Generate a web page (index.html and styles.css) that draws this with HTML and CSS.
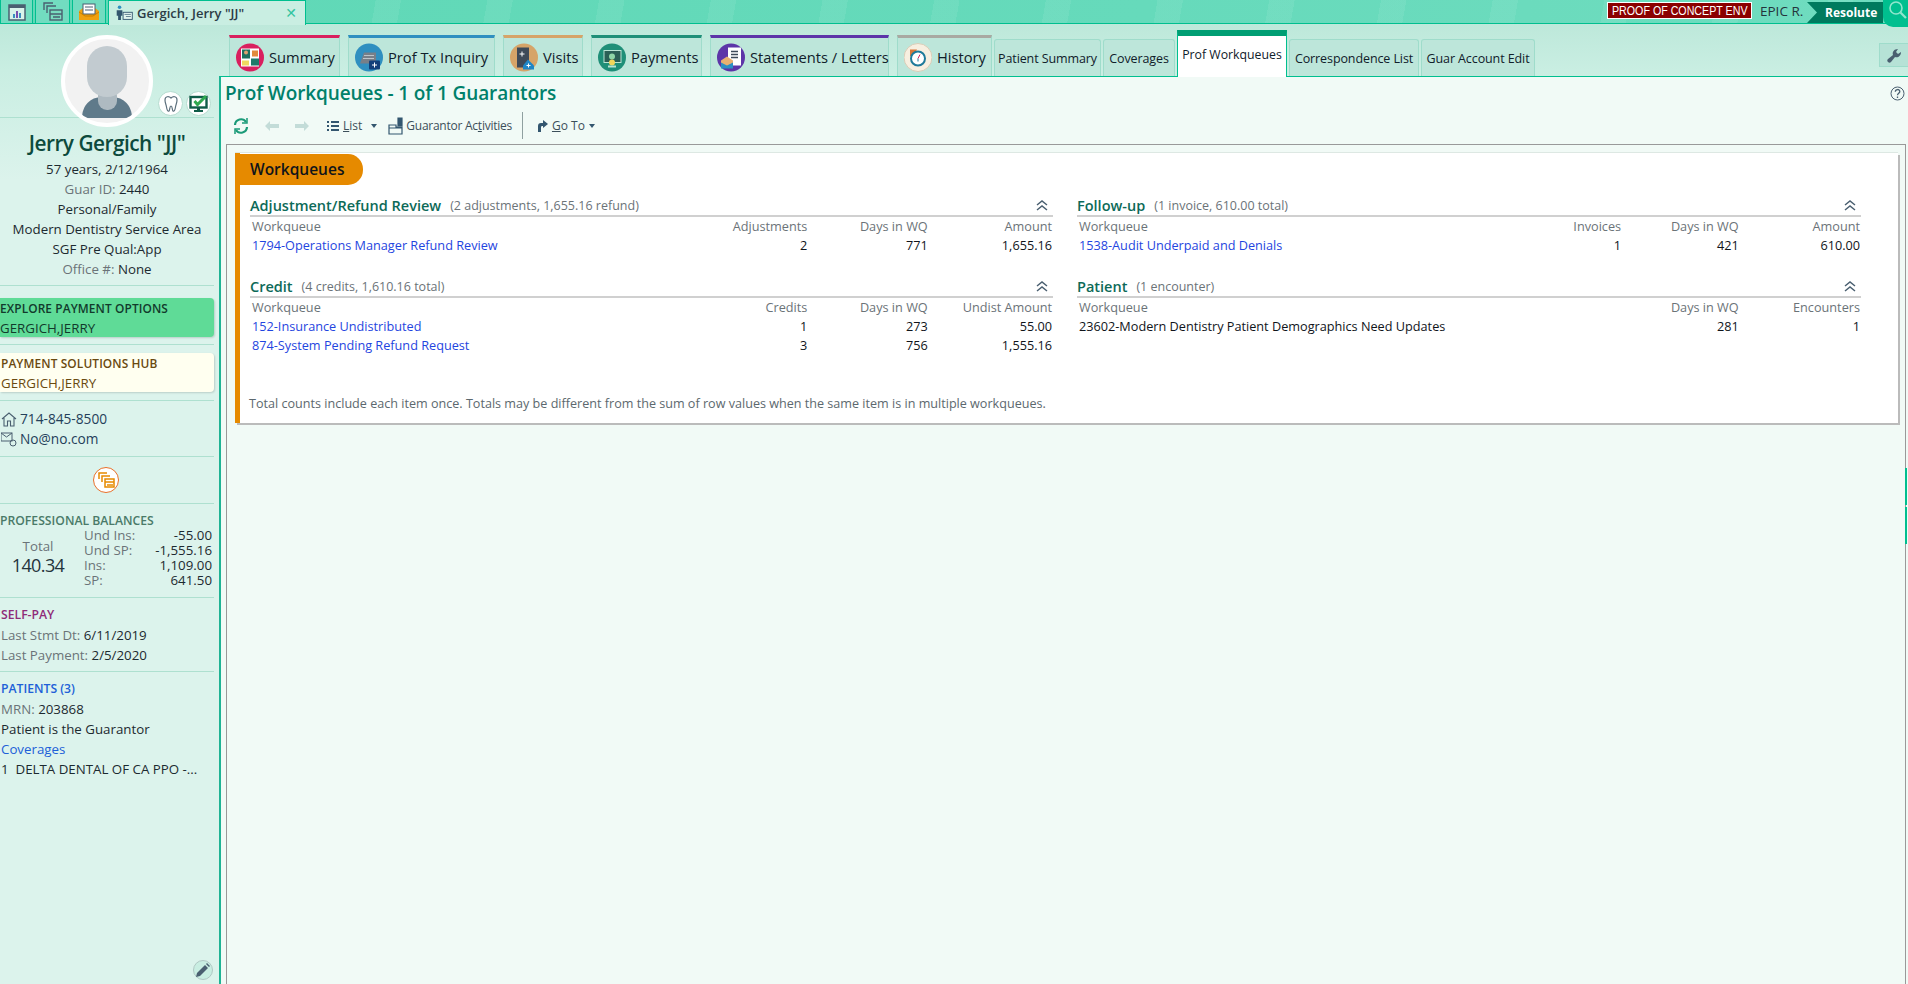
FILE: index.html
```html
<!DOCTYPE html>
<html lang="en">
<head>
    <meta charset="UTF-8">
    <meta name="viewport" content="width=device-width, initial-scale=1.0">
    <title>Prof Workqueues</title>
    <link rel="stylesheet" href="styles.css">
</head>
<body>

<header class="topbar">
    <div class="top-tab top-tab-a">
        <svg width="20" height="20" viewBox="0 0 20 20"><rect x="2" y="3" width="16" height="15" fill="#d8f3ea" stroke="#4a5f70" stroke-width="1.5"/><rect x="2" y="3" width="16" height="3" fill="#4a5f70"/><rect x="6" y="12" width="2" height="4" fill="#3a8ec0"/><rect x="9" y="9" width="2" height="7" fill="#7a4fb0"/><rect x="12" y="11" width="2" height="5" fill="#3a8ec0"/></svg>
    </div>
    <div class="top-tab top-tab-b">
        <svg width="20" height="20" viewBox="0 0 20 20" fill="none" stroke="#4a5f70" stroke-width="1.4"><path d="M1 8V1h9M4 11V4h9"/><rect x="7" y="8" width="12" height="10" fill="#7adcc0"/><path d="M7 12h12M10 15h7"/></svg>
    </div>
    <div class="top-tab top-tab-c">
        <svg width="22" height="20" viewBox="0 0 22 20"><path d="M1 9l4-3h12l4 3v9H1z" fill="#f0a010"/><rect x="5" y="2" width="12" height="10" fill="#fff" stroke="#4a5f70"/><path d="M7 5h8M7 8h8" stroke="#4a5f70"/><path d="M1 10l6 4h8l6-4" fill="none" stroke="#c97f00"/></svg>
    </div>
    <div class="top-tab patient-tab">
        <svg width="17" height="16" viewBox="0 0 24 22"><circle cx="5" cy="3" r="2.5" fill="#2f8fc0"/><path d="M1 7h8v8H7v6H3v-6H1z" fill="#33566f"/><rect x="10" y="10" width="13" height="10" fill="#e4f6f0" stroke="#33566f" stroke-width="1.3"/><path d="M12 13h9M14 16h7" stroke="#33566f"/></svg>
        <span class="patient-name">Gergich, Jerry "JJ"</span>
        <span class="tab-close">&#x2715;</span>
    </div>
    <div class="top-right">
        <span class="env-badge"><span class="env-text">PROOF OF CONCEPT ENV</span></span>
        <span class="user-name">EPIC R.</span>
        <span class="app-name">Resolute</span>
        <span class="search-btn">
            <svg width="19" height="19" viewBox="0 0 19 19" fill="none" stroke="#8fe6cd" stroke-width="1.6"><circle cx="8" cy="7" r="6"/><path d="M12.5 11.5L18 17" stroke-width="2.2"/></svg>
        </span>
    </div>
</header>

<div class="layout">
    <aside class="side">
        <div class="avatar-row">
            <div class="avatar">
                <svg width="84" height="84" viewBox="0 0 84 84"><path d="M17 79c0-12 8-21 20-21h10c12 0 20 9 20 21z" fill="#5f7a8a"/><rect x="33" y="48" width="19" height="23" rx="9" fill="#aebac1"/><rect x="22" y="7" width="40" height="51" rx="20" fill="#c2cbd0"/></svg>
            </div>
            <span class="badge badge-tooth">
                <svg width="16" height="18" viewBox="0 0 16 18" fill="none" stroke="#5c6f7c" stroke-width="1.2"><path d="M8 3C6 1 2 1 2 5c0 3 1 4 1.5 7 .4 3 1.5 5 2.5 4s.5-5 2-5 1 4 2 5 2.100-1 2.500-4c.5-3 1.500-4 1.500-7 0-4-4-4-6-2z"/></svg>
            </span>
            <span class="badge badge-check">
                <svg width="20" height="19" viewBox="0 0 20 19"><rect x="1.500" y="3" width="16" height="10.500" fill="#fff" stroke="#0f5c48" stroke-width="2.400"/><path d="M8 14h3v2h3v2H5v-2h3z" fill="#0f5c48"/><path d="M5.500 7l3 3.500L17 2" fill="none" stroke="#2fa84f" stroke-width="3"/></svg>
            </span>
        </div>

        <div class="side-section patient-info">
            <h2 class="guar-name">Jerry Gergich "JJ"</h2>
            <div>57 years, 2/12/1964</div>
            <div><span class="muted">Guar ID:</span> 2440</div>
            <div>Personal/Family</div>
            <div>Modern Dentistry Service Area</div>
            <div>SGF Pre Qual:App</div>
            <div><span class="muted">Office #:</span> None</div>
        </div>

        <div class="side-section box-section">
            <div class="side-box box-green">
                <div class="box-title">EXPLORE PAYMENT OPTIONS</div>
                <div>GERGICH,JERRY</div>
            </div>
        </div>
        <div class="side-section box-section">
            <div class="side-box box-cream">
                <div class="box-title">PAYMENT SOLUTIONS HUB</div>
                <div>GERGICH,JERRY</div>
            </div>
        </div>

        <div class="side-section contact">
            <div class="contact-line">
                <svg width="16" height="16" viewBox="0 0 16 16" fill="none" stroke="#4a5f70" stroke-width="1.1"><path d="M1 8l7-6 7 6M3 7v8h3.500v-5h3v5H13V7"/></svg>
                714-845-8500
            </div>
            <div class="contact-line">
                <svg width="16" height="16" viewBox="0 0 16 16" fill="none" stroke="#4a5f70"><rect x="0" y="2" width="11" height="8"/><path d="M0 2l5.500 4L11 2"/><circle cx="12" cy="12" r="3"/></svg>
                No@no.com
            </div>
        </div>

        <div class="side-section orange-row">
            <span class="orange-btn">
                <svg width="17" height="16" viewBox="0 0 17 16" fill="none" stroke="#e68a00" stroke-width="1.500"><path d="M1 7V1h8M4 10V4h8"/><rect x="7" y="7" width="9" height="8" fill="#fff"/><path d="M7 10h9M9 13h6"/></svg>
            </span>
        </div>

        <div class="side-section balances">
            <div class="sec-title title-green">PROFESSIONAL BALANCES</div>
            <div class="balance-wrap">
                <div class="balance-total">
                    <div class="muted">Total</div>
                    <div class="total-num">140.34</div>
                </div>
                <dl class="balance-list">
                    <dt>Und Ins:</dt><dd>-55.00</dd>
                    <dt>Und SP:</dt><dd>-1,555.16</dd>
                    <dt>Ins:</dt><dd>1,109.00</dd>
                    <dt>SP:</dt><dd>641.50</dd>
                </dl>
            </div>
        </div>

        <div class="side-section plain">
            <div class="sec-title title-purple">SELF-PAY</div>
            <div><span class="muted">Last Stmt Dt:</span> 6/11/2019</div>
            <div><span class="muted">Last Payment:</span> 2/5/2020</div>
        </div>

        <div class="side-section plain no-line">
            <div class="sec-title title-blue">PATIENTS (3)</div>
            <div><span class="muted">MRN:</span> 203868</div>
            <div>Patient is the Guarantor</div>
            <div class="side-link">Coverages</div>
            <div>1&nbsp; DELTA DENTAL OF CA PPO -...</div>
        </div>

        <span class="pencil-btn">
            <svg width="14" height="14" viewBox="0 0 14 14"><path d="M0 14l1-4 8-8 3 3-8 8zM10 1l1-1 3 3-1 1z" fill="#4a5f70"/></svg>
        </span>
    </aside>

    <div class="main-col">
        <nav class="tabs">
            <div class="tab big t-summary">
                <svg class="tab-icon" viewBox="0 0 28 28"><circle cx="14" cy="14" r="14" fill="#d9205f"/><rect x="5" y="5" width="18" height="18" fill="#fff"/><rect x="6" y="6" width="8" height="9" fill="#1f6f60"/><circle cx="10" cy="9" r="2" fill="#e0a070"/><rect x="16" y="7" width="6" height="6" fill="#e28a3c"/><rect x="6" y="17" width="7" height="5" fill="#f0d860"/><rect x="15" y="15" width="8" height="7" fill="#1f7a6a"/></svg>
                Summary
            </div>
            <div class="tab big t-inquiry">
                <svg class="tab-icon" viewBox="0 0 28 28"><circle cx="14" cy="14" r="14" fill="#2f8fc0"/><path d="M5 20l4-11h12v11z" fill="#777f88"/><path d="M9 12h10M8 15h11" stroke="#bcc4ca"/><rect x="14" y="17" width="11" height="9" rx="1" fill="#123f7a"/><path d="M19.500 19v5M17 21.500h5" stroke="#fff"/></svg>
                Prof Tx Inquiry
            </div>
            <div class="tab big t-visits">
                <svg class="tab-icon" viewBox="0 0 28 28"><circle cx="14" cy="14" r="14" fill="#d6a468"/><rect x="7" y="4" width="12" height="20" fill="#3e4a58"/><path d="M12 8v5M9.500 10.500h5" stroke="#fff"/><path d="M13 22l5-6 6 6v4H13z" fill="#1f86c6"/><path d="M18.500 20v4M16.500 22h4" stroke="#fff"/></svg>
                Visits
            </div>
            <div class="tab big t-payments">
                <svg class="tab-icon" viewBox="0 0 28 28"><circle cx="14" cy="14" r="14" fill="#1f8f78"/><rect x="6" y="7" width="17" height="12" fill="#2a5f55" stroke="#b9e4d4"/><circle cx="14" cy="13" r="3" fill="#8fd6a8"/><circle cx="14" cy="19" r="3" fill="#f2d65a"/><path d="M10 23h8" stroke="#b9e4d4" stroke-width="2"/></svg>
                Payments
            </div>
            <div class="tab big t-statements">
                <svg class="tab-icon" viewBox="0 0 28 28"><circle cx="14" cy="14" r="14" fill="#5d35a8"/><rect x="11" y="4" width="13" height="18" fill="#fff"/><path d="M14 8h7M14 11h7M14 14h7" stroke="#3e4a58" stroke-width="1.300"/><path d="M4 17l6-4 6 4v7H4z" fill="#e8b070"/><path d="M4 19l6 3 6-3v6H4z" fill="#2b8fc4"/></svg>
                Statements / Letters
            </div>
            <div class="tab big t-history">
                <svg class="tab-icon" viewBox="0 0 28 28"><circle cx="14" cy="14" r="14" fill="#f7efe0" stroke="#d8cdb8"/><path d="M6 6h7l-3 6-4 1z" fill="#d9783a"/><circle cx="14" cy="15" r="7" fill="#fff" stroke="#1f7a9a" stroke-width="2"/><path d="M14 15l2-4" stroke="#d9205f"/><path d="M14 15v3" stroke="#1f7a9a"/></svg>
                History
            </div>
            <div class="tab small t-patsum">Patient Summary</div>
            <div class="tab small t-cov">Coverages</div>
            <div class="tab active t-prof">Prof Workqueues</div>
            <div class="tab small t-corr">Correspondence List</div>
            <div class="tab small t-guar">Guar Account Edit</div>
            <span class="wrench-btn">
                <svg width="15" height="15" viewBox="0 0 15 15"><path d="M1 14c-1-1-1-2 0-3l5-4c-1-3 1-6 5-6l-2 3 2 2 3-2c0 4-3 6-6 5l-4 5c-1 1-2 1-3 0z" fill="#4a5f70"/></svg>
            </span>
        </nav>

        <main class="panel">
            <div class="title-row">
                <h1 class="page-title">Prof Workqueues - 1 of 1 Guarantors</h1>
                <svg class="help-icon" width="15" height="15" viewBox="0 0 15 15" fill="none" stroke="#4a5f70"><circle cx="7.500" cy="7.500" r="6.500"/><path d="M5.300 5.800c0-3 4.500-3 4.500-.2 0 1.800-2.300 1.700-2.300 3.700M7.500 10.500v1.500" stroke-width="1.300"/></svg>
            </div>

            <div class="toolbar">
                <svg class="tb-refresh" width="16" height="18" viewBox="0 0 16 18" fill="none" stroke="#1a9a78" stroke-width="2.200"><path d="M2 8a6 6 0 0 1 11-3M14 10a6 6 0 0 1-11 3"/><path d="M14 1v5H9M2 17v-5h5" stroke-width="1.500"/></svg>
                <svg class="tb-back" width="14" height="10" viewBox="0 0 14 10"><path d="M0 5l5-5v3h9v4H5v3z" fill="#c3dcd8"/></svg>
                <svg class="tb-fwd" width="14" height="10" viewBox="0 0 14 10"><path d="M14 5L9 0v3H0v4h9v3z" fill="#c3dcd8"/></svg>
                <span class="tb-item tb-list">
                    <svg width="12" height="12" viewBox="0 0 12 12" fill="#33566f"><path d="M0 1h2v2H0zM4 1h8v2H4zM0 5h2v2H0zM4 5h8v2H4zM0 9h2v2H0zM4 9h8v2H4z"/></svg>
                    <span><u>L</u>ist</span>
                </span>
                <span class="caret tb-list-caret"></span>
                <span class="tb-item tb-act">
                    <svg width="15" height="18" viewBox="0 0 15 18" fill="none" stroke="#33566f" stroke-width="1.200"><path d="M1 8h7v2h6v7H1zM1 11h13"/><path d="M10 1h4v8h-4z" fill="#33566f"/></svg>
                    <span>Guarantor Ac<u>t</u>ivities</span>
                </span>
                <span class="tb-sep"></span>
                <span class="tb-item tb-go">
                    <svg width="10" height="12" viewBox="0 0 10 12"><path d="M0 12V6c0-2 1-3 3-3h2V0l5 4-5 4V6H4c-1 0-1 1-1 2v4z" fill="#33566f"/></svg>
                    <span><u>G</u>o To</span>
                </span>
                <span class="caret"></span>
            </div>

            <div class="frame">
                <section class="card">
                    <div class="pill">Workqueues</div>
                    <div class="wq-grid">
                        <div class="wq-section">
                            <div class="wq-head">
                                <h3>Adjustment/Refund Review</h3>
                                <span class="wq-sub">(2 adjustments, 1,655.16 refund)</span>
                                <svg class="chev" width="12" height="11" viewBox="0 0 12 11" fill="none" stroke="#4a5f70" stroke-width="1.500"><path d="M1 5l5-4 5 4M1 10l5-4 5 4"/></svg>
                            </div>
                            <table class="wq-table">
                                <tr><th>Workqueue</th><th class="num">Adjustments</th><th class="num">Days in WQ</th><th class="num">Amount</th></tr>
                                <tr><td><a href="#">1794-Operations Manager Refund Review</a></td><td class="num">2</td><td class="num">771</td><td class="num">1,655.16</td></tr>
                            </table>
                        </div>
                        <div class="wq-section">
                            <div class="wq-head">
                                <h3>Follow-up</h3>
                                <span class="wq-sub">(1 invoice, 610.00 total)</span>
                                <svg class="chev" width="12" height="11" viewBox="0 0 12 11" fill="none" stroke="#4a5f70" stroke-width="1.500"><path d="M1 5l5-4 5 4M1 10l5-4 5 4"/></svg>
                            </div>
                            <table class="wq-table">
                                <tr><th>Workqueue</th><th class="num">Invoices</th><th class="num">Days in WQ</th><th class="num">Amount</th></tr>
                                <tr><td><a href="#">1538-Audit Underpaid and Denials</a></td><td class="num">1</td><td class="num">421</td><td class="num">610.00</td></tr>
                            </table>
                        </div>
                        <div class="wq-section">
                            <div class="wq-head">
                                <h3>Credit</h3>
                                <span class="wq-sub">(4 credits, 1,610.16 total)</span>
                                <svg class="chev" width="12" height="11" viewBox="0 0 12 11" fill="none" stroke="#4a5f70" stroke-width="1.500"><path d="M1 5l5-4 5 4M1 10l5-4 5 4"/></svg>
                            </div>
                            <table class="wq-table">
                                <tr><th>Workqueue</th><th class="num">Credits</th><th class="num">Days in WQ</th><th class="num">Undist Amount</th></tr>
                                <tr><td><a href="#">152-Insurance Undistributed</a></td><td class="num">1</td><td class="num">273</td><td class="num">55.00</td></tr>
                                <tr><td><a href="#">874-System Pending Refund Request</a></td><td class="num">3</td><td class="num">756</td><td class="num">1,555.16</td></tr>
                            </table>
                        </div>
                        <div class="wq-section">
                            <div class="wq-head">
                                <h3>Patient</h3>
                                <span class="wq-sub">(1 encounter)</span>
                                <svg class="chev" width="12" height="11" viewBox="0 0 12 11" fill="none" stroke="#4a5f70" stroke-width="1.500"><path d="M1 5l5-4 5 4M1 10l5-4 5 4"/></svg>
                            </div>
                            <table class="wq-table">
                                <tr><th>Workqueue</th><th class="num">&nbsp;</th><th class="num">Days in WQ</th><th class="num">Encounters</th></tr>
                                <tr><td class="nowrap">23602-Modern Dentistry Patient Demographics Need Updates</td><td class="num"></td><td class="num">281</td><td class="num">1</td></tr>
                            </table>
                        </div>
                    </div>
                    <p class="footnote">Total counts include each item once. Totals may be different from the sum of row values when the same item is in multiple workqueues.</p>
                </section>
                <span class="edge-mark edge-a"></span>
                <span class="edge-mark edge-b"></span>
            </div>
        </main>
    </div>
</div>

</body>
</html>
```

FILE: styles.css
```css
* {
    box-sizing: border-box;
}
html, body {
    height: 100%;
}
body {
    margin: 0;
    height: 984px;
    overflow: hidden;
    font-family: "Open Sans", "Noto Sans", sans-serif;
    font-size: 12.5px;
    color: #1c2a30;
    background: linear-gradient(180deg, #bde8da 24px, #c9eee2 70px, #dcf3ec 180px);
    display: flex;
    flex-direction: column;
}

/* top bar */
.topbar {
    height: 24px;
    flex: none;
    display: flex;
    border-bottom: 1px solid #00bf8f;
    background:
        repeating-linear-gradient(100deg, rgba(255,255,255,0) 0 40px, rgba(255,255,255,.07) 40px 65px, rgba(255,255,255,0) 65px 110px),
        linear-gradient(90deg, #5fd8b6, #66dabb 60%, #70dcbf);
    position: relative;
}
.top-tab {
    height: 24px;
    margin-right: 2px;
    background: #72dcc0;
    border: 1px solid #00bf8f;
    border-top: none;
    display: flex;
    align-items: center;
    justify-content: center;
}
.top-tab-a { width: 33px; }
.top-tab-b { width: 35px; }
.top-tab-c { width: 34px; }
.patient-tab {
    width: 198px;
    height: 25px;
    background: #c9eee2;
    justify-content: flex-start;
    padding-left: 7px;
    border-top: 1px solid #00bf8f;
    border-bottom: none;
    position: relative;
}
.patient-name {
    margin-left: 4px;
    font-size: 13px;
    font-weight: 600;
    color: #2c3c46;
}
.tab-close {
    margin-left: auto;
    margin-right: 8px;
    color: #33c4a0;
    font-size: 14px;
    font-family: "DejaVu Sans", sans-serif;
}
.top-right {
    margin-left: auto;
    display: flex;
    align-items: flex-start;
}
.env-badge {
    margin-top: 2px;
    width: 145px;
    height: 17px;
    background: #8b0000;
    border: 1px solid #fff;
    color: #fff;
    font-family: "Liberation Sans", sans-serif;
    font-size: 13.5px;
    line-height: 15px;
    display: flex;
    justify-content: center;
    overflow: hidden;
    white-space: nowrap;
}
.env-text {
    display: block;
    flex: none;
    transform: scaleX(.79);
}
.user-name {
    margin-left: 8px;
    width: 47px;
    line-height: 22px;
    font-size: 13.5px;
    color: #24343c;
}
.app-name {
    width: 76px;
    height: 21px;
    margin-top: 2px;
    padding-left: 18px;
    background: #007a5e;
    clip-path: polygon(0 0, 100% 0, 100% 100%, 0 100%, 10px 50%);
    color: #fff;
    font-weight: 700;
    font-size: 12px;
    line-height: 22px;
}
.search-btn {
    width: 25px;
    height: 27px;
    background: #00bf8f;
    border-bottom-left-radius: 10px;
    padding: 1px 0 0 5px;
    position: relative;
    z-index: 2;
}

/* layout */
.layout {
    flex: 1;
    display: flex;
    min-height: 0;
}

/* sidebar */
.side {
    width: 219px;
    flex: none;
    position: relative;
    text-align: center;
    font-size: 13.3px;
    line-height: 20px;
}
.avatar-row {
    height: 94px;
    margin-right: 5px;
    border-bottom: 1px solid #aee0d0;
    position: relative;
}
.avatar {
    position: absolute;
    left: 61px;
    top: 11px;
    width: 92px;
    height: 92px;
    border-radius: 50%;
    border: 4px solid #fff;
    background: #f2f2f2;
    overflow: hidden;
}
.badge {
    position: absolute;
    top: 67px;
    width: 25px;
    height: 25px;
    border-radius: 50%;
    background: #fff;
    border: 1px solid #b5dccf;
    display: flex;
    align-items: center;
    justify-content: center;
}
.badge-tooth { left: 158px; }
.badge-check { left: 186px; }
.side-section {
    margin-right: 5px;
    border-bottom: 1px solid #aee0d0;
}
.side-section.no-line {
    border-bottom: none;
}
.patient-info {
    padding: 11px 0 6px;
    height: 168px;
}
.guar-name {
    margin: 0 0 2px;
    font-size: 20.8px;
    line-height: 28px;
    font-weight: 600;
    letter-spacing: -.5px;
    color: #0c4a3c;
}
.muted {
    color: #6b7378;
}
.box-section {
    padding: 12px 0 7px;
    height: 59px;
    text-align: left;
}
.box-section + .box-section {
    padding: 8px 0 8px;
    height: 56px;
}
.side-box {
    height: 39px;
    line-height: 20px;
    margin-top: 0;
    border-radius: 0 4px 4px 0;
    box-shadow: 1px 1px 2px rgba(0, 0, 0, .15);
}
.box-green {
    background: #5fdb97;
    color: #123a2c;
}
.box-cream {
    background: #fffff0;
    color: #6a4a10;
    padding-left: 1px;
}
.box-title {
    font-size: 11.9px;
    font-weight: 600;
    letter-spacing: .1px;
}
.contact {
    height: 56px;
    padding-top: 8px;
    text-align: left;
    color: #24405a;
}
.contact-line {
    display: flex;
    align-items: center;
    gap: 3px;
    padding-left: 1px;
    font-size: 13.7px;
}
.orange-row {
    height: 47px;
    display: flex;
    align-items: center;
    justify-content: center;
    padding-right: 2px;
}
.orange-btn {
    width: 26px;
    height: 26px;
    border-radius: 50%;
    border: 1px solid #e8702a;
    background: #fff;
    display: flex;
    align-items: center;
    justify-content: center;
}
.sec-title {
    font-size: 12.2px;
    font-weight: 600;
    line-height: 20px;
    text-align: left;
}
.title-green { color: #4a7a68; }
.title-purple { color: #8f2a78; }
.title-blue { color: #2060d8; }
.balances {
    height: 94px;
    padding-top: 7px;
}
.balance-wrap {
    display: flex;
}
.balance-total {
    width: 76px;
    padding-top: 6px;
    line-height: 19px;
}
.total-num {
    font-size: 18px;
    line-height: 19px;
    letter-spacing: -.6px;
    color: #24343c;
}
.balance-list {
    flex: 1;
    margin: -3px 2px 0 8px;
    display: grid;
    grid-template-columns: 1fr auto;
    line-height: 15px;
    text-align: left;
}
.balance-list dt {
    color: #6b7378;
}
.balance-list dd {
    margin: 0;
    text-align: right;
}
.plain {
    text-align: left;
    padding: 7px 0 7px 1px;
    height: 74px;
}
.no-line {
    height: auto;
    padding-top: 7px;
}
.side-link {
    color: #2060d8;
}
.pencil-btn {
    position: absolute;
    left: 193px;
    bottom: 4px;
    width: 20px;
    height: 20px;
    border-radius: 50%;
    background: #c9eee2;
    border: 1px solid #b0c8c4;
    display: flex;
    align-items: center;
    justify-content: center;
}

/* main column */
.main-col {
    flex: 1;
    min-width: 0;
    display: flex;
    flex-direction: column;
}
.tabs {
    height: 52px;
    flex: none;
    display: flex;
    align-items: flex-end;
    padding-left: 10px;
    position: relative;
}
.tab {
    color: #10202a;
    white-space: nowrap;
    display: flex;
    align-items: center;
}
.tab.big {
    height: 41px;
    margin-right: 8px;
    border-top: 3px solid;
    border-left: 1px solid #9fdccb;
    border-right: 1px solid #9fdccb;
    background: #bde6da;
    padding-left: 6px;
    gap: 5px;
    font-size: 14.7px;
}
.tab-icon {
    width: 28px;
    height: 29px;
    flex: none;
}
.t-summary { width: 111px; border-top-color: #d9205f !important; }
.t-inquiry { width: 147px; border-top-color: #2f8fc0 !important; }
.t-visits { width: 80px; border-top-color: #d6a468 !important; }
.t-payments { width: 111px; border-top-color: #1f8f78 !important; }
.t-statements { width: 179px; border-top-color: #5d35a8 !important; }
.t-history { width: 95px; border-top-color: #a9a9a2 !important; margin-right: 2px !important; }
.tab.small {
    height: 37px;
    margin-right: 2px;
    justify-content: center;
    border: 1px solid #9fdccb;
    border-bottom: none;
    border-radius: 3px 3px 0 0;
    background: #bde6da;
    font-size: 12.5px;
    letter-spacing: -.1px;
}
.t-patsum { width: 107px; }
.t-cov { width: 72px; }
.t-corr { width: 130px; }
.t-guar { width: 114px; }
.tab.active {
    width: 110px;
    height: 47px;
    margin-right: 2px;
    margin-bottom: -1px;
    padding-bottom: 4px;
    justify-content: center;
    background: #fff;
    border-top: 6px solid #009e73;
    border-left: 1px solid #00bf8f;
    border-right: 1px solid #00bf8f;
    font-size: 12.3px;
    position: relative;
    z-index: 2;
}
.wrench-btn {
    position: absolute;
    right: 0;
    top: 19px;
    width: 29px;
    height: 24px;
    background: #b6e2d6;
    border: 1px solid #9fdccb;
    border-right: none;
    display: flex;
    align-items: center;
    justify-content: center;
}

/* panel */
.panel {
    flex: 1;
    min-height: 0;
    display: flex;
    flex-direction: column;
    background: #f1faf6;
    border-top: 1px solid #00bf8f;
    border-left: 2px solid #1fb394;
    position: relative;
}
.title-row {
    height: 32px;
    flex: none;
    display: flex;
    align-items: center;
    padding: 0 3px 0 4px;
}
.page-title {
    margin: 0;
    font-size: 19px;
    font-weight: 600;
    color: #00806a;
    letter-spacing: -.1px;
    white-space: nowrap;
}
.help-icon {
    margin-left: auto;
}
.toolbar {
    height: 33px;
    margin-bottom: 2px;
    flex: none;
    display: flex;
    align-items: center;
    padding-left: 12px;
    font-size: 12px;
    color: #3c4f5a;
    white-space: nowrap;
}
.tb-back { margin-left: 16px; }
.tb-fwd { margin-left: 16px; }
.tb-item {
    display: flex;
    align-items: center;
    gap: 4px;
}
.tb-list { margin-left: 18px; }
.tb-act { margin-left: 11px; gap: 3px; letter-spacing: -.25px; }
.tb-sep {
    width: 1px;
    height: 27px;
    margin: 0 15px 0 10px;
    background: #8fa0a0;
}
.tb-go { gap: 4px; }
.caret {
    width: 0;
    height: 0;
    margin-left: 4px;
    border-left: 3.5px solid transparent;
    border-right: 3.5px solid transparent;
    border-top: 4px solid #33566f;
}
.caret.tb-list-caret { margin-left: 9px; }
.frame {
    flex: 1;
    min-height: 0;
    margin: 0 2px 0 5px;
    padding: 8px 7px 0 8px;
    border: 1px solid #999;
    border-bottom: none;
    position: relative;
}
.edge-mark {
    position: absolute;
    right: -2px;
    width: 2px;
    height: 37px;
    background: #00bf8f;
}
.edge-a { top: 323px; }
.edge-b { top: 362px; }

/* workqueue card */
.card {
    height: 270px;
    background: #fff;
    border-left: 5px solid #e68a00;
    box-shadow: 2px 2px 0 #bbb, 0 -1px 0 #dde8e3;
    padding: 1px 37px 0 10px;
}
.pill {
    width: 128px;
    height: 31px;
    margin-left: -15px;
    padding-left: 15px;
    background: #e68a00;
    border-radius: 0 15px 15px 0;
    font-size: 15.5px;
    font-weight: 600;
    line-height: 30px;
    color: #10141a;
}
.wq-grid {
    margin-top: 12px;
    display: grid;
    grid-template-columns: 803px 1fr;
    column-gap: 24px;
    row-gap: 4px;
}
.wq-section {
    min-height: 77px;
}
.wq-head {
    height: 20px;
    display: flex;
    align-items: center;
    gap: 9px;
    border-bottom: 2px solid #d0d0d0;
    padding-bottom: 1px;
}
.wq-head h3 {
    margin: 0;
    font-size: 14.5px;
    font-weight: 600;
    color: #0d6a58;
    white-space: nowrap;
}
.wq-sub {
    font-size: 12.5px;
    color: #6b7378;
}
.chev {
    margin-left: auto;
    margin-right: 5px;
}
.wq-table {
    width: 100%;
    margin-top: -1px;
    table-layout: fixed;
    border-collapse: collapse;
    font-size: 12.7px;
}
.wq-table th, .wq-table td {
    height: 19px;
    padding: 0;
    font-weight: 400;
    text-align: left;
    white-space: nowrap;
}
.wq-table th {
    color: #6b7378;
}
.wq-table th:first-child, .wq-table td:first-child {
    width: 54%;
    padding-left: 2px;
}
.wq-table th:last-child, .wq-table td:last-child {
    width: 15.6%;
    padding-right: 1px;
}
.wq-table th:nth-child(3), .wq-table td:nth-child(3) {
    width: 15%;
}
.wq-table .num {
    text-align: right;
}
.wq-table a {
    color: #1f45e0;
    text-decoration: none;
}
.wq-table td {
    color: #10141a;
}
.footnote {
    margin: 39px 0 0 -1px;
    font-size: 12.6px;
    line-height: 20px;
    color: #5c686e;
    white-space: nowrap;
}
```
